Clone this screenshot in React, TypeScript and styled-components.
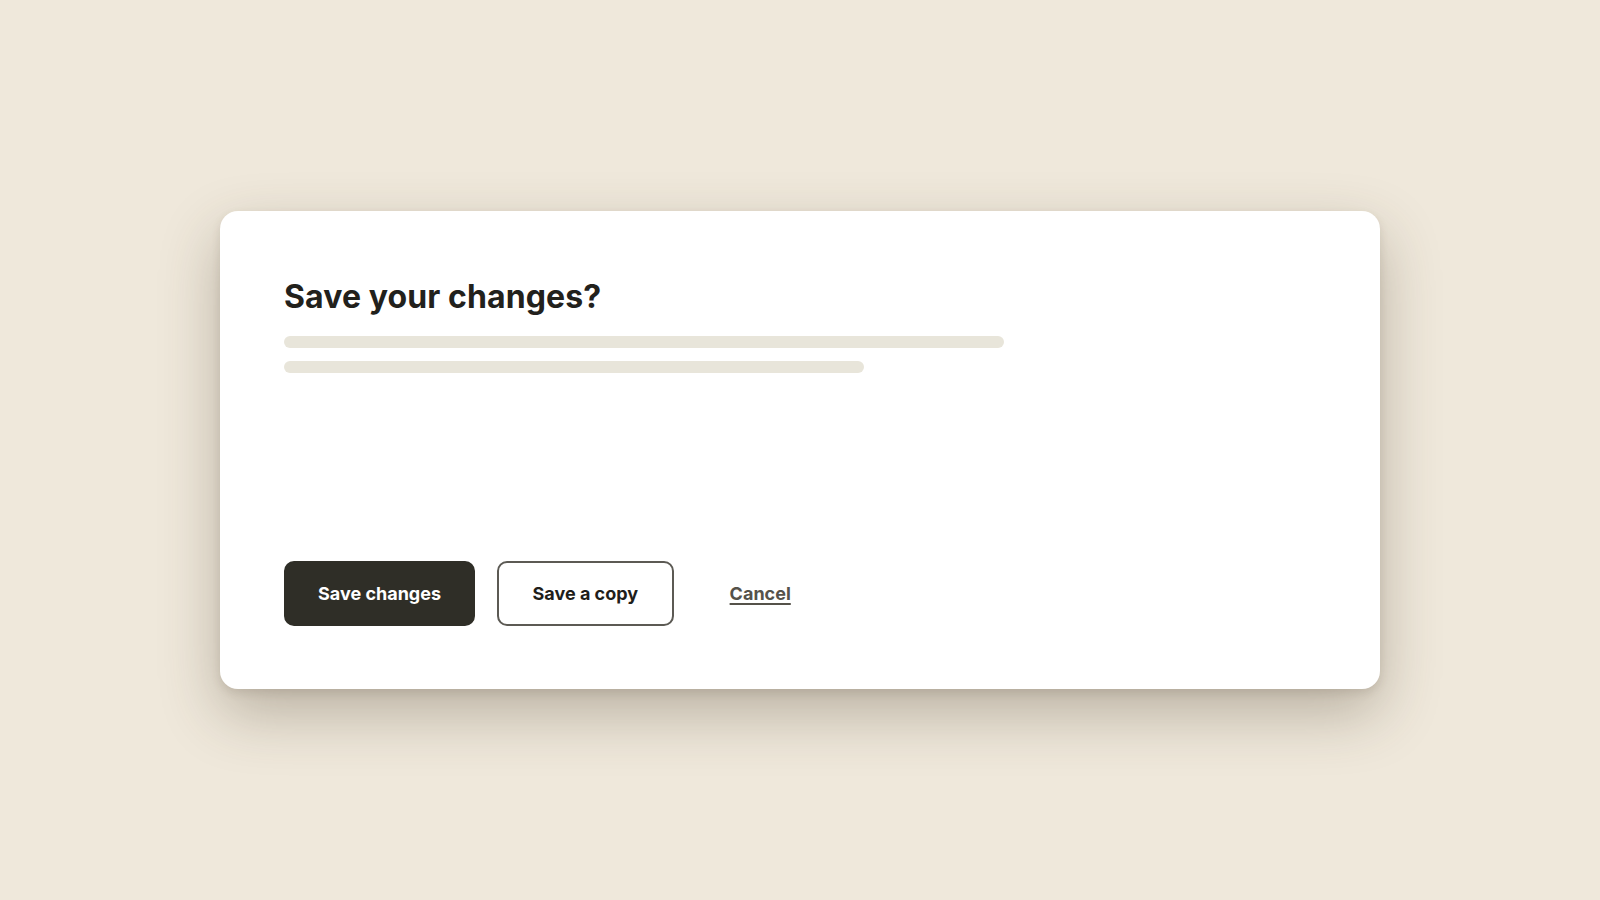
import React from "react";
import styled, { createGlobalStyle } from "styled-components";

const Global = createGlobalStyle`
  html, body { margin: 0; padding: 0; }
  body {
    background: #efe8db;
    font-family: Inter, "Noto Sans", "Liberation Sans", sans-serif;
    -webkit-font-smoothing: antialiased;
  }
`;

const Page = styled.main`
  width: 100vw;
  height: 100vh;
  display: flex;
  align-items: center;
  justify-content: center;
  background: #efe8db;
`;

const Card = styled.section`
  width: 1160px;
  height: 478px;
  box-sizing: border-box;
  padding: 67px 64px 63px 64px;
  background: #ffffff;
  border-radius: 18px;
  box-shadow: 0 24px 60px rgba(70, 60, 40, 0.32), 0 4px 10px rgba(70, 60, 40, 0.12);
  display: flex;
  flex-direction: column;
`;

const Title = styled.h2`
  margin: 0;
  font-size: 32px;
  line-height: 38px;
  font-weight: 700;
  letter-spacing: 0.1px;
  color: #22211c;
`;

const Lines = styled.div`
  margin-top: 20px;
  display: flex;
  flex-direction: column;
  gap: 13px;
`;

const Placeholder = styled.div<{ $w: number }>`
  width: ${(p) => p.$w}px;
  height: 12px;
  border-radius: 6px;
  background: #e8e5da;
`;

const Actions = styled.div`
  margin-top: auto;
  display: flex;
  align-items: center;
  gap: 22px;
`;

const Button = styled.button<{ $variant: "primary" | "outline" | "link" }>`
  height: 65px;
  box-sizing: border-box;
  padding: 0 ${(p) => (p.$variant === "outline" ? 33.5 : 32)}px;
  border-radius: 10px;
  font-family: Inter, "Noto Sans", "Liberation Sans", sans-serif;
  font-size: 18px;
  font-weight: 700;
  cursor: pointer;
  border: 2px solid
    ${(p) =>
      p.$variant === "primary" ? "#2f2e27" : p.$variant === "outline" ? "#5c5a54" : "transparent"};
  background: ${(p) => (p.$variant === "primary" ? "#2f2e27" : "#ffffff")};
  color: ${(p) =>
    p.$variant === "primary" ? "#ffffff" : p.$variant === "outline" ? "#1f1e1a" : "#55524a"};
  text-decoration: ${(p) => (p.$variant === "link" ? "underline" : "none")};
  text-underline-offset: 3px;
  text-decoration-thickness: 2px;
`;

export default function App() {
  return (
    <>
      <Global />
      <Page>
        <Card>
          <Title>Save your changes?</Title>
          <Lines>
            <Placeholder $w={720} />
            <Placeholder $w={580} />
          </Lines>
          <Actions>
            <Button $variant="primary">Save changes</Button>
            <Button $variant="outline">Save a copy</Button>
            <Button $variant="link">Cancel</Button>
          </Actions>
        </Card>
      </Page>
    </>
  );
}
